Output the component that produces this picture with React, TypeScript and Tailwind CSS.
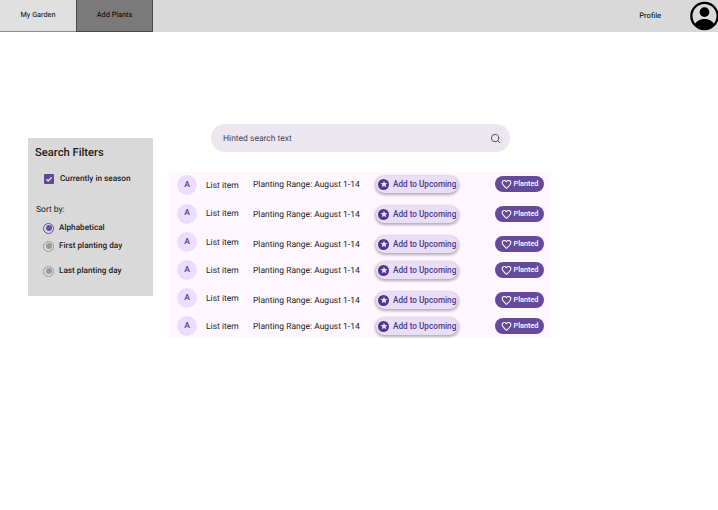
import { Search } from "lucide-react";

const leftRows = ["h-[28px]", "h-[29px]", "h-[28px]", "h-[28px]", "h-[28px]", "h-[28px]"];
const midRows = ["mt-0", "mt-[4px]", "mt-[4px]", "mt-0", "mt-[4px]", "mt-0"];

const Star = () => (
  <span className="w-[11px] h-[11px] rounded-full bg-[#4f378b] flex items-center justify-center shrink-0">
    <svg viewBox="0 0 24 24" className="w-[8px] h-[8px]" fill="#e8def8">
      <path d="M12 2l3 6.9 7.5.7-5.700 5 1.700 7.400L12 18l-6.500 4 1.700-7.400-5.700-5L9 8.900z" />
    </svg>
  </span>
);

const Heart = () => (
  <svg viewBox="0 0 24 24" className="w-[11px] h-[11px]" fill="none" stroke="#ffffff" strokeWidth="2.2">
    <path d="M12 20.500l-1.300-1.200C5.600 14.700 2.500 11.900 2.500 8.400 2.500 5.600 4.700 3.500 7.400 3.500c1.800 0 3.500.9 4.600 2.300 1.100-1.400 2.800-2.300 4.600-2.300 2.700 0 4.900 2.100 4.900 4.900 0 3.500-3.100 6.300-8.200 10.900z" />
  </svg>
);

const Radio = ({ on, label }: { on?: boolean; label: string }) => (
  <div className="flex items-center gap-[5px] leading-[12px]">
    <span className={`w-[11px] h-[11px] rounded-full border flex items-center justify-center ${on ? "border-[#6750a4]" : "border-[#9a9a9a]"}`}>
      <span className={`w-[6px] h-[6px] rounded-full ${on ? "bg-[#6750a4]" : "bg-[#9a9a9a]"}`} />
    </span>
    <span className="text-[8.2px] font-medium text-[#1d1b20]">{label}</span>
  </div>
);

export default function App() {
  return (
    <div className="w-[718px] h-[510px] bg-white font-['Roboto',sans-serif] [text-rendering:geometricPrecision] overflow-hidden">
      <div className="h-[32px] bg-[#d9d9d9] flex items-stretch text-[7.3px] text-black">
        <div className="w-[76px] bg-[#e0e0e0] border-b border-[#8a8a8a] flex items-center justify-center">My Garden</div>
        <div className="w-[77px] bg-[#7a7a7a] border border-t-0 border-[#4a4a4a] flex items-center justify-center">Add Plants</div>
        <div className="flex-1" />
        <div className="flex items-center mr-[29px] text-[7.6px]">Profile</div>
        <div className="w-[29px] mr-[-1px] flex items-center">
          <svg viewBox="0 0 30 30" className="w-[30px] h-[30px]">
            <circle cx="15" cy="15" r="13.6" fill="none" stroke="#000" strokeWidth="2.4" />
            <circle cx="15" cy="11" r="5" fill="#000" />
            <path d="M5 23.500c2-4 6-5.500 10-5.500s8 1.500 10 5.500c-2.500 3-6 4.700-10 4.700s-7.500-1.700-10-4.700z" fill="#000" />
          </svg>
        </div>
      </div>

      <div className="flex">
        <aside className="w-[125px] h-[158px] ml-[28px] mt-[106px] bg-[#d9d9d9] pl-[7px] pt-[8px]">
          <h2 className="text-[11.2px] font-medium text-[#1d1b20] leading-[14px]">Search Filters</h2>
          <div className="flex items-center gap-[6px] mt-[12px] ml-[9px]">
            <span className="w-[10px] h-[10px] bg-[#5f479c] rounded-[1px] flex items-center justify-center">
              <svg viewBox="0 0 12 12" className="w-[8px] h-[8px]" fill="none" stroke="#fff" strokeWidth="1.8">
                <path d="M2 6.500l2.700 2.500L10 3.500" />
              </svg>
            </span>
            <span className="text-[8.2px] font-medium text-[#1d1b20] pt-[1px]">Currently in season</span>
          </div>
          <p className="text-[8.5px] text-[#1d1b20] mt-[19px] ml-[1px]">Sort by:</p>
          <div className="ml-[8px] mt-[5px] flex flex-col">
            <Radio on label="Alphabetical" />
            <div className="mt-[6px]"><Radio label="First planting day" /></div>
            <div className="mt-[13px]"><Radio label="Last planting day" /></div>
          </div>
        </aside>

        <main className="ml-[16px]">
          <div className="w-[299px] h-[28px] ml-[42px] mt-[92px] rounded-full bg-[#ece6f0] flex items-center justify-between pl-[12px] pr-[9px]">
            <span className="text-[8.5px] text-[#49454f] pt-[2px]">Hinted search text</span>
            <Search size={11} color="#49454f" strokeWidth={2} />
          </div>

          <div className="w-[382px] h-[166px] mt-[20px] bg-[#fef7ff] flex overflow-hidden">
            <div className="flex flex-col -mt-[1px] w-[84px]">
              {leftRows.map((h, i) => (
                <div key={i} className={`${h} shrink-0 flex items-center`}>
                  <span className="w-[20px] h-[20px] ml-[8px] rounded-full bg-[#eaddff] text-[#4f378b] text-[8.5px] font-medium flex items-center justify-center">A</span>
                  <span className="ml-[9px] pt-[2px] text-[8.5px] text-[#1d1b20]">List item</span>
                </div>
              ))}
            </div>
            <div className="flex flex-col -mt-[1px]">
              {midRows.map((m, i) => (
                <div key={i} className={`${m} h-[26px] shrink-0 flex items-center`}>
                  <span className="w-[123px] pt-[2px] text-[8.5px] text-[#1d1b20] whitespace-nowrap">Planting Range: August 1-14</span>
                  <button className="w-[82px] h-[17px] rounded-full bg-[#e8def8] shadow-[0_1px_3px_1px_rgba(0,0,0,0.3)] flex items-center pl-[2px] gap-[4px] text-[8.2px] font-medium text-[#4f378b] whitespace-nowrap">
                    <Star />
                    Add to Upcoming
                  </button>
                  <button className="ml-[37px] w-[49px] h-[16px] rounded-full bg-[#65499c] flex items-center justify-center gap-[2px] text-[7.3px] font-medium text-white">
                    <Heart />
                    Planted
                  </button>
                </div>
              ))}
            </div>
          </div>
        </main>
      </div>
    </div>
  );
}
